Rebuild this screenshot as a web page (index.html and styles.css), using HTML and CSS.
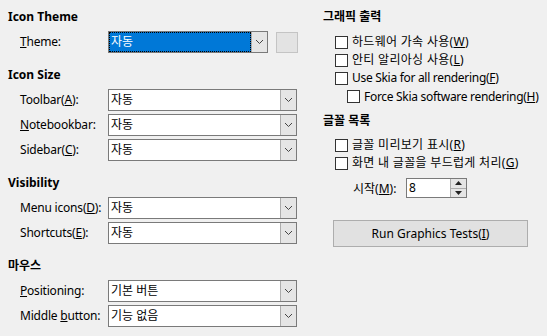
FILE: index.html
```html
<!DOCTYPE html>
<html lang="ko">
<head>
  <meta charset="UTF-8" />
  <title>View Options</title>
  <link rel="stylesheet" href="styles.css">
</head>
<body>
  <div class="dialog">
    <div class="col left">
      <section class="group first">
        <h3>Icon Theme</h3>
        <div class="row">
          <label><u>T</u>heme:</label>
          <div class="combo focus">
            <span class="value">자동</span>
            <span class="drop"><svg width="9" height="6" viewBox="0 0 9 6"><path d="M1 1l3.5 3.5L8 1" fill="none" stroke="#444" stroke-width="1"/></svg></span>
          </div>
          <span class="swatch"></span>
        </div>
      </section>

      <section class="group">
        <h3>Icon Size</h3>
        <div class="row">
          <label>Toolbar(<u>A</u>):</label>
          <div class="combo wide"><span class="value">자동</span><span class="drop"><svg width="9" height="6" viewBox="0 0 9 6"><path d="M1 1l3.5 3.5L8 1" fill="none" stroke="#444" stroke-width="1"/></svg></span></div>
        </div>
        <div class="row">
          <label><u>N</u>otebookbar:</label>
          <div class="combo wide"><span class="value">자동</span><span class="drop"><svg width="9" height="6" viewBox="0 0 9 6"><path d="M1 1l3.5 3.5L8 1" fill="none" stroke="#444" stroke-width="1"/></svg></span></div>
        </div>
        <div class="row">
          <label>Sidebar(<u>C</u>):</label>
          <div class="combo wide"><span class="value">자동</span><span class="drop"><svg width="9" height="6" viewBox="0 0 9 6"><path d="M1 1l3.5 3.5L8 1" fill="none" stroke="#444" stroke-width="1"/></svg></span></div>
        </div>
      </section>

      <section class="group">
        <h3>Visibility</h3>
        <div class="row">
          <label>Menu icons(<u>D</u>):</label>
          <div class="combo wide"><span class="value">자동</span><span class="drop"><svg width="9" height="6" viewBox="0 0 9 6"><path d="M1 1l3.5 3.5L8 1" fill="none" stroke="#444" stroke-width="1"/></svg></span></div>
        </div>
        <div class="row">
          <label>Shortcuts(<u>E</u>):</label>
          <div class="combo wide"><span class="value">자동</span><span class="drop"><svg width="9" height="6" viewBox="0 0 9 6"><path d="M1 1l3.5 3.5L8 1" fill="none" stroke="#444" stroke-width="1"/></svg></span></div>
        </div>
      </section>

      <section class="group">
        <h3>마우스</h3>
        <div class="row">
          <label><u>P</u>ositioning:</label>
          <div class="combo wide"><span class="value">기본 버튼</span><span class="drop"><svg width="9" height="6" viewBox="0 0 9 6"><path d="M1 1l3.5 3.5L8 1" fill="none" stroke="#444" stroke-width="1"/></svg></span></div>
        </div>
        <div class="row">
          <label>Middle <u>b</u>utton:</label>
          <div class="combo wide"><span class="value">기능 없음</span><span class="drop"><svg width="9" height="6" viewBox="0 0 9 6"><path d="M1 1l3.5 3.5L8 1" fill="none" stroke="#444" stroke-width="1"/></svg></span></div>
        </div>
      </section>
    </div>

    <div class="col right">
      <section class="group first">
        <h3>그래픽 출력</h3>
        <div class="check"><span class="box"></span>하드웨어 가속 사용(<u>W</u>)</div>
        <div class="check"><span class="box"></span>안티 알리아싱 사용(<u>L</u>)</div>
        <div class="check latin"><span class="box"></span>Use Skia for all rendering(<u>F</u>)</div>
        <div class="check latin sub"><span class="box"></span>Force Skia software rendering(<u>H</u>)</div>
      </section>

      <section class="group fonts">
        <h3>글꼴 목록</h3>
        <div class="check"><span class="box"></span>글꼴 미리보기 표시(<u>R</u>)</div>
        <div class="check"><span class="box"></span>화면 내 글꼴을 부드럽게 처리(<u>G</u>)</div>
        <div class="spin-row">
          <label>시작(<u>M</u>):</label>
          <div class="spin">
            <span class="value">8</span>
            <span class="arrows">
              <span class="up"><svg width="7" height="4" viewBox="0 0 7 4"><path d="M0 4L3.5 0L7 4z" fill="#222"/></svg></span>
              <span class="down"><svg width="7" height="4" viewBox="0 0 7 4"><path d="M0 0L3.5 4L7 0z" fill="#222"/></svg></span>
            </span>
          </div>
        </div>
      </section>

      <button class="test-btn">Run Graphics Tests(<u>I</u>)</button>
    </div>
  </div>
</body>
</html>
```

FILE: styles.css
```css
html, body {
  margin: 0;
  padding: 0;
  background: #f0f0f0;
  font-family: 'Noto Sans', 'Noto Sans CJK KR', sans-serif;
  font-size: 12px;
  color: #000;
}

.dialog {
  display: flex;
  width: 547px;
  height: 336px;
}

.col {
  display: flex;
  flex-direction: column;
  padding-top: 9px;
}

.left {
  width: 290px;
  padding-left: 8px;
}

.right {
  padding-left: 25px;
  width: 220px;
}

h3 {
  margin: 0 0 6px 0;
  font-size: 12px;
  font-weight: bold;
  line-height: 16px;
}

.group {
  margin-top: 11px;
}

.group.first {
  margin-top: 0;
}

.row {
  display: flex;
  align-items: center;
  height: 22px;
  margin-bottom: 3px;
  padding-left: 12px;
}

.row label {
  width: 88px;
  line-height: 16px;
  letter-spacing: -0.2px;
}

.combo {
  display: flex;
  height: 22px;
  box-sizing: border-box;
  border: 1px solid #7a7a7a;
  background: #fff;
}

.combo.wide {
  width: 189px;
}

.combo.focus {
  width: 160px;
}

.combo .value {
  flex: 1;
  line-height: 20px;
  padding-left: 2px;
}

.combo.focus .value {
  background: #0078d7;
  color: #fff;
  outline: 1px dotted #000;
  outline-offset: -1px;
}

.drop {
  width: 15px;
  display: flex;
  align-items: center;
  justify-content: center;
  background: #e5e5e5;
  border-left: 1px solid #acacac;
}

.swatch {
  width: 22px;
  height: 21px;
  box-sizing: border-box;
  margin-left: 8px;
  background: #e3e3e3;
  border: 1px solid #c4c4c4;
}

.check {
  display: flex;
  align-items: center;
  height: 18px;
  padding-left: 12px;
  line-height: 16px;
  white-space: nowrap;
  letter-spacing: 0.3px;
}

.check.latin {
  letter-spacing: -0.3px;
}

.right .first h3 {
  margin-bottom: 8px;
}

.check.sub {
  padding-left: 24px;
  height: 19px;
}

.box {
  flex-shrink: 0;
  width: 13px;
  height: 13px;
  box-sizing: border-box;
  border: 1px solid #333;
  background: #fff;
  margin-right: 4px;
}

.fonts {
  margin-top: 7px;
}

.fonts h3 {
  margin-bottom: 7px;
}

.spin-row {
  display: flex;
  align-items: center;
  margin-top: 6px;
  padding-left: 30px;
}

.spin-row label {
  width: 53px;
}

.spin {
  display: flex;
  width: 61px;
  height: 20px;
  box-sizing: border-box;
  border: 1px solid #7a7a7a;
  background: #fff;
}

.spin .value {
  flex: 1;
  line-height: 18px;
  padding-left: 2px;
}

.arrows {
  display: flex;
  flex-direction: column;
  width: 15px;
  border-left: 1px solid #acacac;
}

.arrows span {
  flex: 1;
  display: flex;
  align-items: center;
  justify-content: center;
  background: #e5e5e5;
}

.arrows .up {
  border-bottom: 1px solid #acacac;
}

.test-btn {
  margin-top: 22px;
  margin-left: 10px;
  width: 195px;
  height: 27px;
  background: #e1e1e1;
  border: 1px solid #adadad;
  font-family: inherit;
  font-size: 12px;
  color: #000;
  padding: 0;
}
```
